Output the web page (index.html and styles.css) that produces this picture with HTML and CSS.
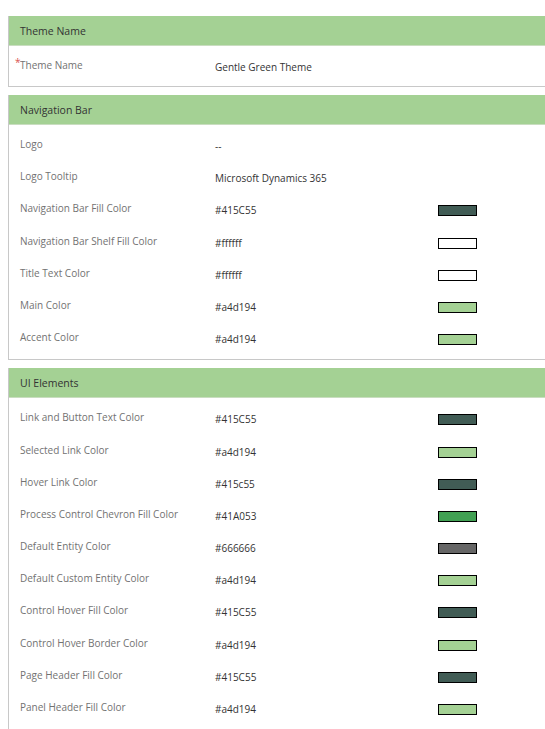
FILE: index.html
```html
<!DOCTYPE html>
<html>
<head>
<meta charset="utf-8">
<link rel="stylesheet" href="styles.css">
</head>
<body>
<div class="page">
  <section class="panel">
    <div class="panel-head">Theme Name</div>
    <div class="panel-body first">
      <div class="row"><div class="label"><span class="req">*</span>Theme Name</div><div class="value">Gentle Green Theme</div><div class="sw-cell"></div></div>
    </div>
  </section>
  <section class="panel">
    <div class="panel-head">Navigation Bar</div>
    <div class="panel-body">
      <div class="row"><div class="label">Logo</div><div class="value">--</div><div class="sw-cell"></div></div>
      <div class="row"><div class="label">Logo Tooltip</div><div class="value">Microsoft Dynamics 365</div><div class="sw-cell"></div></div>
      <div class="row"><div class="label">Navigation Bar Fill Color</div><div class="value">#415C55</div><div class="sw-cell"><span class="swatch" style="background:#415C55"></span></div></div>
      <div class="row"><div class="label">Navigation Bar Shelf Fill Color</div><div class="value">#ffffff</div><div class="sw-cell"><span class="swatch" style="background:#ffffff"></span></div></div>
      <div class="row"><div class="label">Title Text Color</div><div class="value">#ffffff</div><div class="sw-cell"><span class="swatch" style="background:#ffffff"></span></div></div>
      <div class="row"><div class="label">Main Color</div><div class="value">#a4d194</div><div class="sw-cell"><span class="swatch" style="background:#a4d194"></span></div></div>
      <div class="row"><div class="label">Accent Color</div><div class="value">#a4d194</div><div class="sw-cell"><span class="swatch" style="background:#a4d194"></span></div></div>
    </div>
  </section>
  <section class="panel last">
    <div class="panel-head">UI Elements</div>
    <div class="panel-body">
      <div class="row"><div class="label">Link and Button Text Color</div><div class="value">#415C55</div><div class="sw-cell"><span class="swatch" style="background:#415C55"></span></div></div>
      <div class="row"><div class="label">Selected Link Color</div><div class="value">#a4d194</div><div class="sw-cell"><span class="swatch" style="background:#a4d194"></span></div></div>
      <div class="row"><div class="label">Hover Link Color</div><div class="value">#415c55</div><div class="sw-cell"><span class="swatch" style="background:#415c55"></span></div></div>
      <div class="row"><div class="label">Process Control Chevron Fill Color</div><div class="value">#41A053</div><div class="sw-cell"><span class="swatch" style="background:#41A053"></span></div></div>
      <div class="row"><div class="label">Default Entity Color</div><div class="value">#666666</div><div class="sw-cell"><span class="swatch" style="background:#666666"></span></div></div>
      <div class="row"><div class="label">Default Custom Entity Color</div><div class="value">#a4d194</div><div class="sw-cell"><span class="swatch" style="background:#a4d194"></span></div></div>
      <div class="row"><div class="label">Control Hover Fill Color</div><div class="value">#415C55</div><div class="sw-cell"><span class="swatch" style="background:#415C55"></span></div></div>
      <div class="row"><div class="label">Control Hover Border Color</div><div class="value">#a4d194</div><div class="sw-cell"><span class="swatch" style="background:#a4d194"></span></div></div>
      <div class="row"><div class="label">Page Header Fill Color</div><div class="value">#415C55</div><div class="sw-cell"><span class="swatch" style="background:#415C55"></span></div></div>
      <div class="row"><div class="label">Panel Header Fill Color</div><div class="value">#a4d194</div><div class="sw-cell"><span class="swatch" style="background:#a4d194"></span></div></div>
    </div>
  </section>
</div>
</body>
</html>
```
FILE: styles.css
```css
html, body {
  margin: 0;
  padding: 0;
  overflow: hidden;
  background: #ffffff;
}
body {
  font-family: "Open Sans", "Noto Sans", "Liberation Sans", sans-serif;
  font-size: 10px;
  color: #333333;
}
.page {
  padding: 16px 0 0 8px;
  width: 560px;
  display: flex;
  flex-direction: column;
  gap: 8px;
}
.panel {
  border-left: 1px solid #c8c8c8;
  border-bottom: 1px solid #c8c8c8;
}
.panel-head {
  height: 29px;
  background: #a4d194;
  border-bottom: 1px solid #c9ddc0;
  display: flex;
  align-items: center;
  padding-left: 11px;
  color: #333333;
  font-size: 10.5px;
}
.panel-body {
  padding-top: 9px;
}
.panel.last .panel-body {
  padding-bottom: 24px;
}
.row {
  height: 32.2px;
  display: grid;
  grid-template-columns: 195px 223px 60px;
  padding-left: 11px;
}
.panel-body.first .row {
  height: 31px;
}
.label {
  color: #727272;
  padding-top: 3px;
  line-height: 14px;
  white-space: nowrap;
  position: relative;
}
.req {
  position: absolute;
  left: -5px;
  top: 0px;
  color: #d9534f;
  font-size: 10px;
}
.value {
  color: #333333;
  padding-top: 5px;
  line-height: 14px;
  white-space: nowrap;
}
.sw-cell {
  padding-top: 7px;
}
.swatch {
  display: block;
  width: 37px;
  height: 9px;
  border: 1px solid #000000;
}
```
